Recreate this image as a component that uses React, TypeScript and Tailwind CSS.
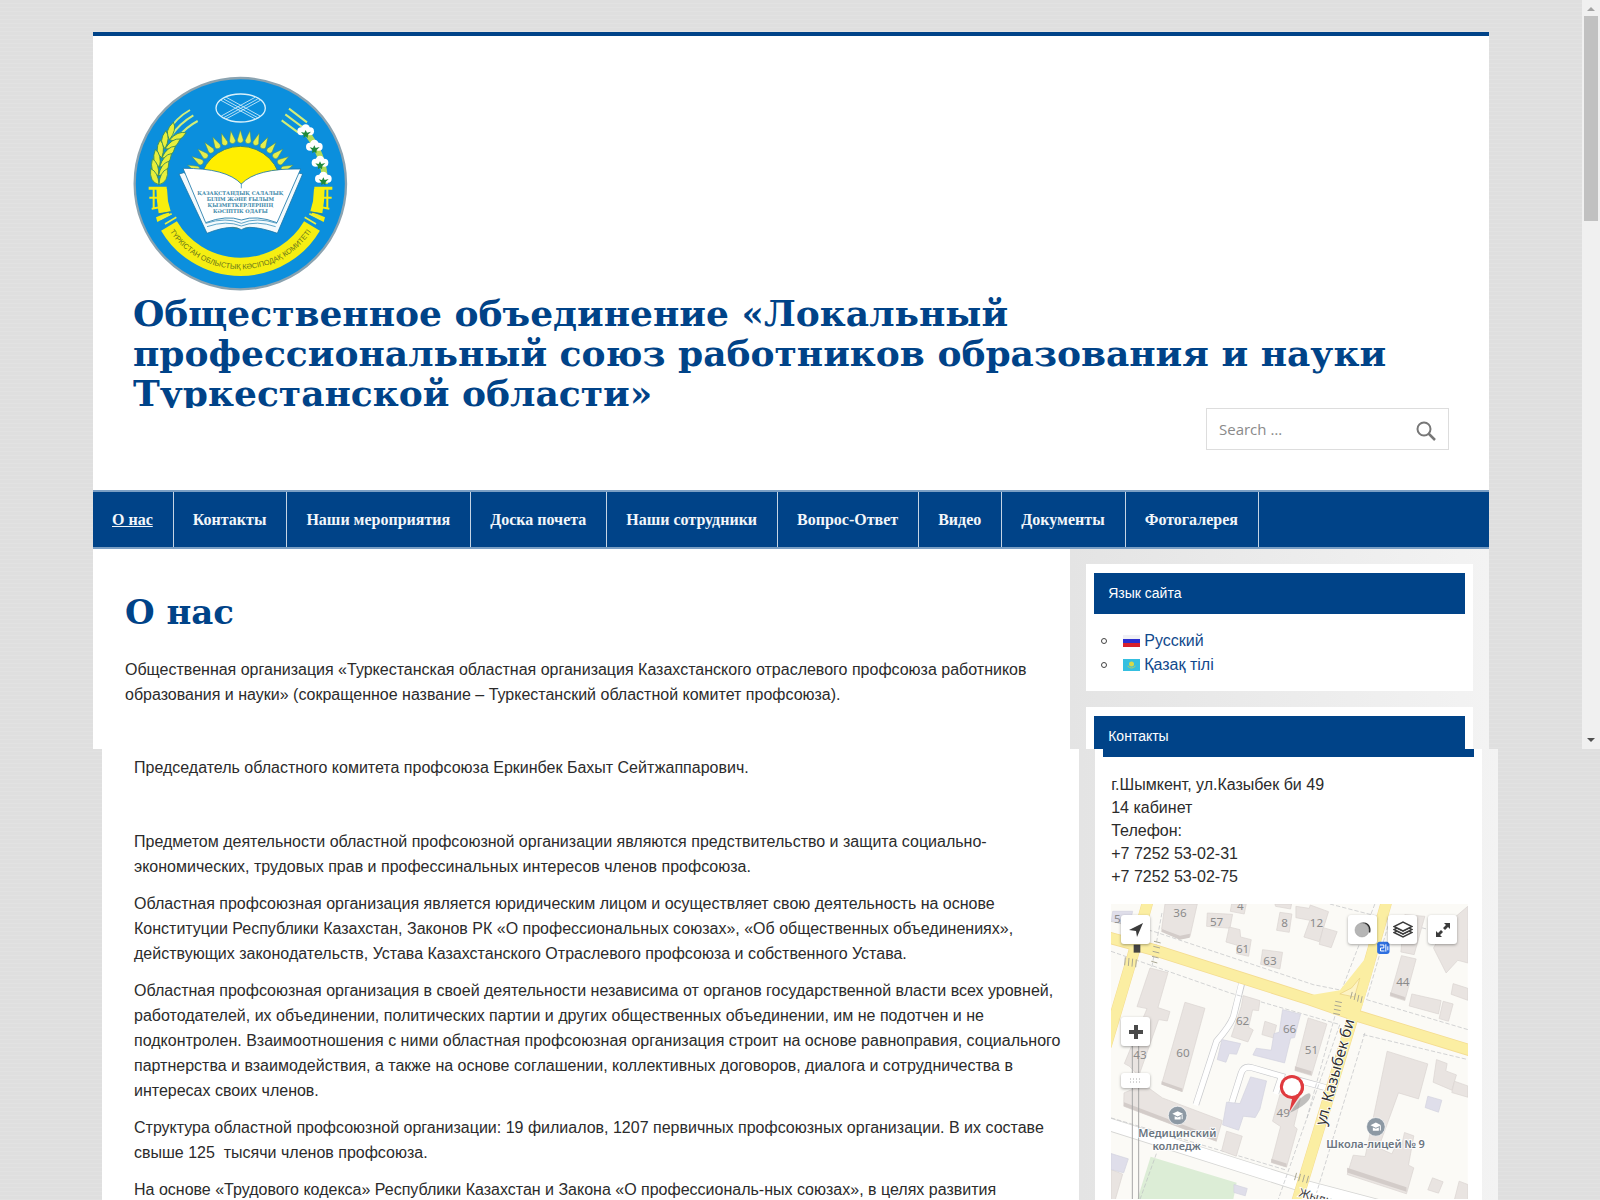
import React from "react";

const NAV = [
  "О нас",
  "Контакты",
  "Наши мероприятия",
  "Доска почета",
  "Наши сотрудники",
  "Вопрос-Ответ",
  "Видео",
  "Документы",
  "Фотогалерея",
];

const PARAGRAPHS: string[][] = [
  ["Председатель областного комитета профсоюза Еркинбек Бахыт Сейтжаппарович."],
  ["\u00a0"],
  [
    "Предметом деятельности областной профсоюзной организации являются предствительство и защита социально-",
    "экономических, трудовых прав и профессинальных интересов членов профсоюза.",
  ],
  [
    "Областная профсоюзная организация является юридическим лицом и осуществляет свою деятельность на основе",
    "Конституции Республики Казахстан, Законов РК «О профессиональных союзах», «Об общественных объединениях»,",
    "действующих законодательств, Устава Казахстанского Отраслевого профсоюза и собственного Устава.",
  ],
  [
    "Областная профсоюзная организация в своей деятельности независима от органов государственной власти всех уровней,",
    "работодателей, их объединении, политических партии и других общественных объединении, им не подотчен и не",
    "подконтролен. Взаимоотношения с ними областная профсоюзная организация строит на основе равноправия, социального",
    "партнерства и взаимодействия, а также на основе соглашении, коллективных договоров, диалога и сотрудничества в",
    "интересах своих членов.",
  ],
  [
    "Структура областной профсоюзной организации: 19 филиалов, 1207 первичных профсоюзных организации. В их составе",
    "свыше 125  тысячи членов профсоюза.",
  ],
  ["На основе «Трудового кодекса» Республики Казахстан и Закона «О професcиональ-ных союзах», в целях развития"],
];

function Lines({ lines }: { lines: string[] }) {
  return (
    <p className="whitespace-pre">
      {lines.map((l, i) => (
        <React.Fragment key={i}>
          {i > 0 && <br />}
          {l}
        </React.Fragment>
      ))}
    </p>
  );
}

function Ornament() {
  return (
    <g>
      <path d="M207 498h54v9h-54z M230 500l32 4 3 38 8 30-36 6-5-36z" fill="#f7ee0e" />
      <path d="M222 506v26M209 531h24M222 534v30M216 564l24-4" stroke="#f7ee0e" strokeWidth="6" fill="none" />
      <path d="M229 590l38-16 4 10-38 20z" fill="#f7ee0e" />
      <path d="M242 596l34-17M256 610l34-20" stroke="#e9ef40" strokeWidth="5" />
      <path d="M236 581l36-7" stroke="#2f7f86" strokeWidth="3" />
    </g>
  );
}

function Cotton({ x, y }: { x: number; y: number }) {
  return (
    <g>
      <circle cx={x - 13} cy={y} r="12" fill="#fff" />
      <circle cx={x + 13} cy={y} r="12" fill="#fff" />
      <circle cx={x} cy={y - 8} r="13" fill="#fff" />
      <path d={`M${x - 14} ${y + 2}l10 2 4-8 4 8 12-3-9 9-1 10-6-5-6 5v-9z`} fill="#1f8a3b" />
    </g>
  );
}

function Emblem() {
  const rays = Array.from({ length: 15 }, (_, i) => (i - 7) * 9.6);
  const grains: [number, number, number][] = [
    [287, 338, 40],
    [270, 362, 30],
    [257, 388, 22],
    [247, 414, 14],
    [241, 440, 8],
    [239, 466, 0],
  ];
  return (
    <svg viewBox="160 166 645 645" className="block size-[215px]" role="img" aria-label="Эмблема профсоюза">
      <circle cx="482" cy="489" r="317" fill="#0b8fdd" stroke="#8ba3b0" strokeWidth="7" />
      <g fill="none" stroke="#d9f1fb" strokeWidth="4">
        <ellipse cx="483" cy="262" rx="74" ry="42" />
        <g strokeWidth="2.5">
          <path d="M424 239L527 295M432 235L534 291M440 230L541 286" />
          <path d="M542 239L439 295M534 235L432 291M526 230L425 286" />
        </g>
      </g>
      {rays.map((a) => (
        <path key={a} d="M482 328l9 30q0 8-9 9q-9-1-9-9z" fill="#e6ee4a" stroke="#3f8c6e" strokeWidth="1.5" transform={`rotate(${a} 482 500)`} />
      ))}
      <circle cx="482" cy="500" r="123" fill="#ffee00" stroke="#3b8a78" strokeWidth="3" />
      <path d="M298 460l14-4 165 60h16l160-60 16 4-76 178q-50-18-83-18-12 0-25 7-13-7-25-7-34 0-78 18z" fill="#f3fafd" stroke="#1c77a8" strokeWidth="2.5" />
      <path d="M310 443Q440 442 485 490Q530 442 663 445L592 606Q530 582 485 598Q440 582 378 606Z" fill="#fff" stroke="#1c77a8" strokeWidth="2.5" />
      <path d="M485 487v16M378 608q62-20 107 0q45-20 107 0M382 618q58-20 103-2q45-18 103 2" fill="none" stroke="#3f93bd" strokeWidth="2.5" />
      <g fill="#3a87a8" fontFamily="DejaVu Serif, serif" fontSize="15" fontWeight="700" textAnchor="middle">
        <text x="482" y="522">ҚАЗАҚСТАНДЫҚ САЛАЛЫҚ</text>
        <text x="482" y="540">БІЛІМ ЖӘНЕ ҒЫЛЫМ</text>
        <text x="482" y="558">ҚЫЗМЕТКЕРЛЕРІНІҢ</text>
        <text x="482" y="576">КӘСІПТІК ОДАҒЫ</text>
      </g>
      <g fill="none" stroke="#d3ee78" strokeWidth="6">
        <path d="M331 268Q288 292 264 335M341 284Q300 308 275 345M354 301Q322 318 296 348" />
        <path d="M628 264L682 305M617 281L672 322M606 299L655 335" />
        <path d="M672 325Q736 400 736 490" stroke="#b3dc58" strokeWidth="18" />
      </g>
      {grains.map(([x, y, r], i) => (
        <g key={i} transform={`translate(${x} ${y}) rotate(${r})`} fill="#e8ef3c" stroke="#3c8d55" strokeWidth="2.5">
          <path d="M-1 26Q-31 18-26-22Q-3-12-1 26z" />
          <path d="M-1 26Q29 18 24-22Q1-12-1 26z" />
        </g>
      ))}
      <Cotton x={678} y={332} />
      <Cotton x={704} y={378} />
      <Cotton x={721} y={426} />
      <Cotton x={731} y={474} />
      <Ornament />
      <g transform="matrix(-1 0 0 1 965 0)">
        <Ornament />
      </g>
      <path d="M268 616A249 249 0 0 0 697 616" fill="none" stroke="#f5ee12" strokeWidth="55" />
      <path id="ribbon" d="M254 605A256 256 0 0 0 711 605" fill="none" />
      <text fontFamily="Liberation Sans, sans-serif" fontSize="22" fill="#66751c">
        <textPath href="#ribbon" startOffset="50%" textAnchor="middle">
          ТҮРКІСТАН ОБЛЫСТЫҚ КӘСІПОДАҚ КОМИТЕТІ
        </textPath>
      </text>
    </svg>
  );
}

function FlagRu() {
  return (
    <svg viewBox="0 0 17 12" className="h-3 w-[17px]" aria-hidden="true">
      <path fill="#f0f0f4" d="M0 0h17v4H0z" />
      <path fill="#2a2fd0" d="M0 4h17v4H0z" />
      <path fill="#d8202c" d="M0 8h17v4H0z" />
    </svg>
  );
}

function FlagKz() {
  return (
    <svg viewBox="0 0 17 12" className="h-3 w-[17px]" aria-hidden="true">
      <path fill="#35bfe0" d="M0 0h17v12H0z" />
      <circle cx="8.5" cy="5" r="2.5" fill="#d5d94a" />
      <path d="M4.500 7q4 4 8 0" stroke="#b9cf5a" fill="none" />
    </svg>
  );
}

const BUILDINGS = [
  "M195 13h97l-22 98-30 7-55-30z",
  "M322 40l76 4-8 42-70-6z",
  "M395 13h44l-6 30-42-8z",
  "M388 82l32 8 2 22 32 8-8 50-36-8 2-25-34-10z",
  "M488 150l60 8-8 50-58-14z",
  "M540 38l36 5-8 55-38-6z",
  "M588 20l40 6 3-10 55 20-28 90-46-14 18-50-42-8z",
  "M525 13h50l-3 15-45-8z",
  "M670 84l42 12-18 48-36-10z",
  "M915 45l60 5-32 115-40-8z",
  "M1045 70l59-50v170l-30-8-35 38-38-75z",
  "M905 168l44 10-34 125-44-14z",
  "M936 283l88 20-8 40-88-24z",
  "M1030 305l30 8-14 52-28-8z",
  "M1060 252l44 14v36l-50-18z",
  "M150 205l54 14-30 105 36 12-8 28-26-4-60 170-28-30-15-8 68-165-30-6z",
  "M255 308l60 18-68 250-62-22z",
  "M430 288l50 15-4 30-18-2-12 52 14 8-16 36-50-16 30-90z",
  "M495 365l35 12-10 38-34-10z",
  "M625 355l56 18-46 155-50-15z",
  "M72 580l60-25 55 40 180 68-18 62-278-105z",
  "M380 695l47 15-18 60-44-16z",
  "M540 585l62 10-20 85 10 8-32 115-46-14 28-108-24-16z",
  "M862 455l122 38-28 105-60-18-60 165 40 18 14-30 16 2 8-36 28 10-16 88 16 8-22 78-178-58 18-58 36 4z",
  "M1010 480l32 12-4 22 32 12-14 46-56-24z",
  "M1064 545l40 14v34l-48-14z",
  "M998 835l32 12-14 34-32-10z",
  "M1078 845l26 10v45h-40z",
  "M33 810l35 14-22 76h-13z",
];

const LILAC = [
  "M548 330l54 14-18 70-12 2-18 74-95-24 10-20 45 6 8-50 16-4z",
  "M366 420l56 12-12 32-22-2-10 26-26-8z",
  "M452 532l48 12-20 85-14 25-36-4-14 42-48-16 12-68 40 4z",
  "M984 590l42 12-10 36-40-14z",
  "M402 855l40 12-6 22-34-10z",
  "M33 762l52 16-14 42-38-10z",
  "M38 35h60l-10 40-54-12z",
];

const HOUSE_NUMBERS: [number, number, string][] = [
  [52, 70, "5"],
  [240, 53, "36"],
  [350, 80, "57"],
  [421, 30, "4"],
  [554, 83, "8"],
  [650, 81, "12"],
  [428, 160, "61"],
  [510, 196, "63"],
  [909, 260, "44"],
  [428, 377, "62"],
  [569, 399, "66"],
  [635, 462, "51"],
  [249, 472, "60"],
  [120, 479, "43"],
  [550, 651, "49"],
];

function School({ x, y }: { x: number; y: number }) {
  return (
    <g>
      <circle cx={x} cy={y} r="28" fill="#8d99a4" stroke="#fff" strokeWidth="2" />
      <path d={`M${x - 16} ${y - 5}l16-8 16 8-16 8z M${x - 9} ${y + 2}v10h18v-10l-9 4z M${x + 12} ${y - 2}v13h3v-14z`} fill="#fff" />
    </g>
  );
}

const CONTROL = "absolute flex h-[29px] w-[29px] items-center justify-center rounded-[3px] bg-white shadow-[0_1px_3px_rgba(0,0,0,0.35)]";

function CityMap() {
  return (
    <div className="relative overflow-hidden">
      <svg viewBox="33 13 1071 887" className="block w-full" role="img" aria-label="Карта: ул. Казыбек би 49">
        <path fill="#fbfaf6" d="M33 13h1071v887H33z" />
        <path d="M152 772L410 850 400 900H112z" fill="#dcedd6" />
        <path d="M20 672L620 862 1104 990" fill="none" stroke="#d6d6d4" strokeWidth="40" />
        <path d="M20 672L620 862 1104 990" fill="none" stroke="#fff" strokeWidth="35" />
        <g fill="none" stroke="#c9cacd" strokeWidth="20">
          <path d="M426 250L402 345Q396 372 350 425L288 615" />
          <path d="M395 612L424 520Q432 497 458 505L545 530L528 580" />
          <path d="M590 540L690 568" />
        </g>
        <g fill="none" stroke="#fff" strokeWidth="16">
          <path d="M426 246L402 345Q396 372 350 425L287 617" />
          <path d="M394 614L424 520Q432 497 458 505L545 530L527 583" />
          <path d="M588 540L692 568" />
        </g>
        <g fill="none" stroke="#bdbec1" strokeWidth="2" strokeDasharray="13 6">
          <path d="M33 65L160 95 640 255 725 272 825 13M186 40L155 205" />
          <path d="M33 155L390 280 720 375 535 900M705 350L620 660" />
          <path d="M800 300L1104 390M790 405L1104 480M795 400L650 880M870 60L800 300" />
          <path d="M33 655L560 812M80 190L33 400M690 13L1104 120M120 900L170 760" />
        </g>
        <path d="M20 112L165 152L630 300L760 345L1120 455" fill="none" stroke="#f4dc91" strokeWidth="36" />
        <path d="M145 0L95 180L18 440" fill="none" stroke="#f4dc91" strokeWidth="34" />
        <path d="M862 0L795 235L760 350L590 910" fill="none" stroke="#f4dc91" strokeWidth="34" />
        <path d="M20 112L165 152L630 300L760 345L1120 455M145 0L95 180L18 440M862 0L795 235L760 350L590 910" fill="none" stroke="#fbeea2" strokeWidth="31" />
        <path d="M630 287L720 272 795 178 825 190 785 325 700 345z" fill="#fbeea2" />
        <path d="M720 283L755 265 780 235 764 292z" fill="#fdf3c4" stroke="#e8cf7d" strokeWidth="2" />
        <g stroke="#a9a693" strokeWidth="3">
          <path d="M160 140l20 5M158 155l20 5M156 170l20 5M154 185l18 5M162 125l20 5M76 173l-2 24M87 175l-2 24M98 177l-2 24M109 179l-2 24" />
          <path d="M757 277l-5 20M767 281l-4 20M777 286l-4 20M787 290l-4 20M706 305l20 4M704 317l20 4M702 329l20 4M700 341l20 4M590 820l-6 22M602 823l-6 22M614 826l-6 22M626 829l-6 22" />
        </g>
        <g fill="#e9e4e1" stroke="#d9d3d0" strokeWidth="2">
          {BUILDINGS.map((d) => (
            <path key={d} d={d} />
          ))}
        </g>
        <g fill="#dfdeea" stroke="#d2d1de" strokeWidth="2">
          {LILAC.map((d) => (
            <path key={d} d={d} />
          ))}
        </g>
        <path d="M185 88l55 20 30-6 -1 12-30 6-55-24zM185 545l62 22v10l-62-22zM585 500l50 15v12l-50-14zM871 278l44 14v10l-44-14zM514 778l46 14v11l-46-14zM742 805l178 58v14l-178-58zM72 608l278 106v12l-278-106z" fill="#d3ccc9" />
        <path d="M97 435V900M116 435V900" stroke="#a6a6a6" strokeWidth="3" />
        <path d="M101 135h20v24h-20z" fill="#444" />
        <g fontFamily="Noto Sans, sans-serif" fontSize="35" fill="#8b8b8b" textAnchor="middle">
          {HOUSE_NUMBERS.map(([x, y, t]) => (
            <text key={t} x={x} y={y}>
              {t}
            </text>
          ))}
        </g>
        <g fontFamily="Noto Sans, sans-serif" stroke="#fff" strokeWidth="5" paintOrder="stroke">
          <g fontSize="33" fontWeight="600" fill="#6b7580" textAnchor="middle">
            <text x="232" y="713">Медицинский</text>
            <text x="230" y="750">колледж</text>
            <text x="827" y="745">Школа-лицей № 9</text>
          </g>
          <text transform="translate(676 680) rotate(-74.500)" fontSize="46" fill="#333">
            ул. Казыбек би
          </text>
          <text transform="translate(595 890) rotate(16)" fontSize="36" fill="#3f3f3f">
            Жылқышиев
          </text>
        </g>
        <School x={233} y={648} />
        <School x={828} y={682} />
        <rect x="832" y="126" width="37" height="37" rx="8" fill="#2e6fe0" />
        <path d="M840 136h12v9h-10v9h12M858 134v22M864 140v12" stroke="#fff" strokeWidth="3" fill="none" />
        <path d="M570 640L598 600Q632 570 632 588Q630 612 570 640z" fill="#777" opacity="0.45" />
        <path d="M568 638L577 596A33 33 0 1 1 601 588Q588 605 568 638z" fill="#e03a3e" />
        <circle cx="576" cy="562" r="36" fill="#e03a3e" />
        <circle cx="576" cy="562" r="27" fill="#fff" />
      </svg>
      <button type="button" aria-label="Моё местоположение" className={`${CONTROL} left-[10px] top-[11px]`}>
        <svg viewBox="0 0 16 16" className="size-4">
          <path d="M15 1L1 8l7 1 1 6z" fill="#3b3b3b" />
        </svg>
      </button>
      <button type="button" aria-label="Приблизить" className={`${CONTROL} left-[10px] top-[113px]`}>
        <svg viewBox="0 0 14 14" className="size-[14px]">
          <path d="M7 0v14M0 7h14" stroke="#4a4a4a" strokeWidth="4" />
        </svg>
      </button>
      <button type="button" aria-label="Масштаб" className="absolute left-[10px] top-[169px] flex h-[15px] w-[29px] items-center justify-center rounded-[3px] bg-white shadow-[0_1px_3px_rgba(0,0,0,0.35)]">
        <svg viewBox="0 0 12 5" className="h-[5px] w-3">
          <path d="M0 1h12M0 4h12" stroke="#aaa" strokeDasharray="1 2" />
        </svg>
      </button>
      <button type="button" aria-label="Пробки" className={`${CONTROL} right-[91px] top-[11px]`}>
        <svg viewBox="0 0 18 16" className="h-4 w-[18px]">
          <path d="M6 1Q14-1 16 5Q17 8 16 11z" fill="#222" />
          <circle cx="8" cy="8" r="7" fill="#b5b5b5" stroke="#999" strokeWidth="0.5" />
        </svg>
      </button>
      <button type="button" aria-label="Слои" className={`${CONTROL} right-[51px] top-[11px]`}>
        <svg viewBox="0 0 20 17" className="h-[17px] w-5" fill="#fff" stroke="#3b3b3b" strokeWidth="1.400">
          <path d="M1 11.500l9 4.500 9-4.500-3-1.500-6 3-6-3z" />
          <path d="M1 8.500l9 4.500 9-4.500-3-1.500-6 3-6-3z" />
          <path d="M1 5.500l9 4.500 9-4.500L10 1z" />
        </svg>
      </button>
      <button type="button" aria-label="На весь экран" className={`${CONTROL} right-[11px] top-[11px]`}>
        <svg viewBox="0 0 16 16" className="size-4" fill="#3b3b3b">
          <path d="M15 1v6l-2-2-3 3-2-2 3-3-2-2zM1 15V9l2 2 3-3 2 2-3 3 2 2z" />
        </svg>
      </button>
    </div>
  );
}

export default function App() {
  return (
    <div className="flex h-screen flex-col overflow-hidden bg-[#dfdfdf] bg-[repeating-linear-gradient(180deg,#dfdfdf_0px,#dfdfdf_3px,#e2e2e2_3px,#e2e2e2_4px)] font-['Liberation_Sans',sans-serif] text-base leading-[25px] text-[#2b2b2b]">
      <div className="flex shrink-0">
        <div className="min-w-0 flex-1 pt-8">
          <div className="mx-auto max-w-[1396px] border-t-4 border-[#004388] bg-white">
            <header className="px-10 pb-10 pt-10">
              <Emblem />
              <p className="h-[117px] overflow-hidden whitespace-nowrap pt-0.5 font-['DejaVu_Serif',serif] text-[36px] font-bold leading-10 text-[#004388]">
                Общественное объединение «Локальный
                <br />
                профессиональный союз работников образования и науки
                <br />
                Туркестанской области»
              </p>
              <form className="ml-auto flex h-[42px] w-[243px] items-center border border-[#dddddd] bg-white px-3" onSubmit={(e) => e.preventDefault()}>
                <input type="search" aria-label="Search" placeholder="Search …" className="min-w-0 flex-1 bg-transparent font-['Open_Sans',sans-serif] text-[15px] outline-none placeholder:text-[#8a8a8a]" />
                <button type="submit" aria-label="Искать">
                  <svg viewBox="0 0 20 20" className="mt-1 size-5" fill="none" stroke="#777" strokeWidth="2">
                    <circle cx="8" cy="8" r="6.500" />
                    <path d="M12.500 12.500L19 19" strokeWidth="2.500" />
                  </svg>
                </button>
              </form>
            </header>
            <nav className="flex border-y-2 border-[#7b9fc4] bg-[#004388]">
              {NAV.map((item, i) => (
                <a
                  key={item}
                  href="#"
                  className={
                    "flex h-[55px] items-center whitespace-nowrap border-r border-[#c5d4e4] pl-[19px] pr-5 font-['Liberation_Serif',serif] text-base font-bold text-[#f2f6fa]" +
                    (i === 0 ? " underline" : "")
                  }
                >
                  {item}
                </a>
              ))}
            </nav>
            <div className="flex">
              <main className="min-w-0 flex-1 px-8 pt-[39px]">
                <h1 className="mb-[21px] font-['DejaVu_Serif',serif] text-[34px] font-bold leading-[48px] text-[#004388]">О нас</h1>
                <Lines
                  lines={[
                    "Общественная организация «Туркестанская областная организация Казахстанского отраслевого профсоюза работников",
                    "образования и науки» (сокращенное название – Туркестанский областной комитет профсоюза).",
                  ]}
                />
              </main>
              <aside className="w-[30%] bg-linear-to-r from-[#e4e4e4] to-[#f3f3f3] px-4 pt-[15px]">
                <section className="mb-4 bg-white px-2 pb-[14px] pt-[9px]">
                  <h3 className="bg-[#004388] px-[14px] py-2 text-sm leading-[25px] text-white">Язык сайта</h3>
                  <ul className="pl-[7px] pt-[15px] text-base leading-[24px] text-[#11498c]">
                    <li className="flex items-center gap-1">
                      <span className="mr-[12px] size-[6px] rounded-full border border-[#444]" />
                      <FlagRu />
                      <a href="#">Русский</a>
                    </li>
                    <li className="flex items-center gap-1">
                      <span className="mr-[12px] size-[6px] rounded-full border border-[#444]" />
                      <FlagKz />
                      <a href="#">Қазақ тілі</a>
                    </li>
                  </ul>
                </section>
                <section className="bg-white px-2 pt-[9px]">
                  <h3 className="bg-[#004388] px-[14px] pt-2 text-sm leading-[25px] text-white">Контакты</h3>
                </section>
              </aside>
            </div>
          </div>
        </div>
        <div className="flex w-[18px] flex-col items-center justify-between bg-[#f0f0f0] py-1" aria-hidden="true">
          <div className="flex flex-col items-center gap-1">
            <svg viewBox="0 0 8 8" className="size-2">
              <path d="M0 7l4-4 4 4z" fill="#a3a3a3" />
            </svg>
            <div className="h-[205px] w-[14px] bg-[#c1c1c1]" />
          </div>
          <svg viewBox="0 0 8 8" className="size-2">
            <path d="M0 1h8L4 5z" fill="#505050" />
          </svg>
        </div>
      </div>
      <div className="mx-auto flex min-h-0 w-full max-w-[1396px] flex-1">
        <article className="flex min-w-0 flex-1 flex-col gap-3 bg-white px-8 pt-[6px]">
          {PARAGRAPHS.map((lines) => (
            <Lines key={lines[0]} lines={lines} />
          ))}
        </article>
        <aside className="w-[30%] bg-linear-to-r from-[#e4e4e4] to-[#f3f3f3] px-4">
          <section className="h-full bg-white px-2">
            <div className="h-2 bg-[#004388]" />
            <div className="pl-2 pr-[6px] pt-4">
              <address className="mb-4 not-italic leading-[23px]">
                г.Шымкент, ул.Казыбек би 49
                <br />
                14 кабинет
                <br />
                Телефон:
                <br />
                +7 7252 53-02-31
                <br />
                +7 7252 53-02-75
              </address>
              <CityMap />
            </div>
          </section>
        </aside>
      </div>
    </div>
  );
}
